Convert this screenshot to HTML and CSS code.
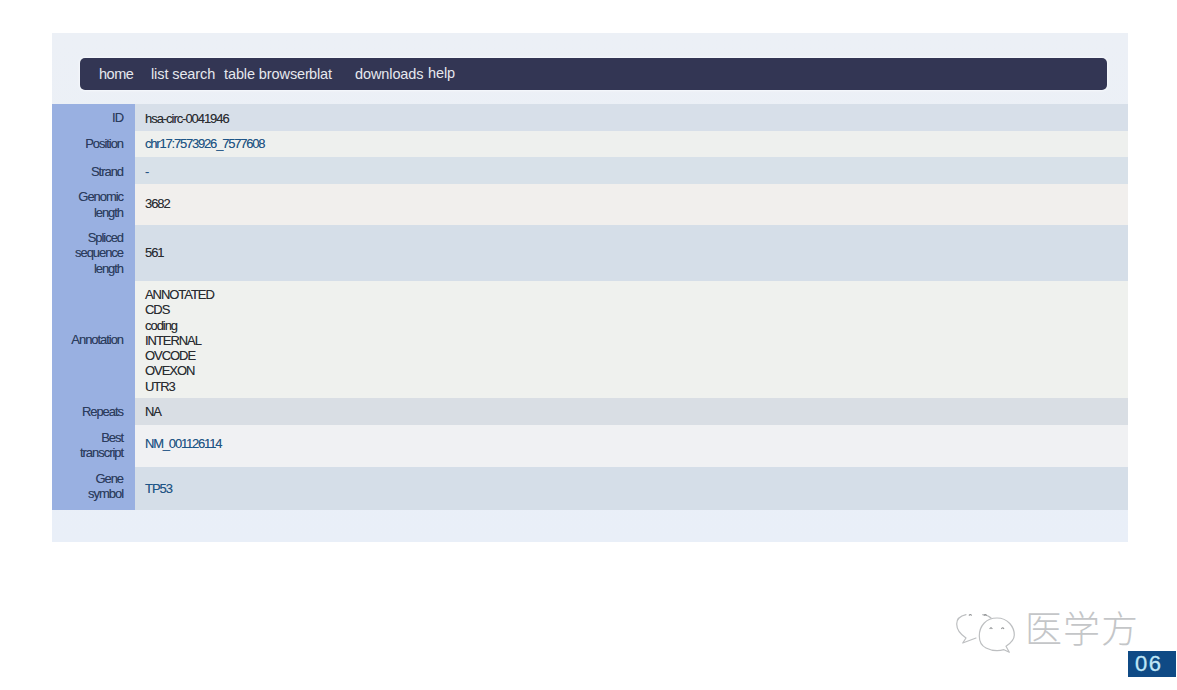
FILE: index.html
```html
<!DOCTYPE html>
<html lang="en">
<head>
<meta charset="utf-8">
<title>hsa-circ-0041946</title>
<link rel="stylesheet" href="styles.css">
</head>
<body>
<main class="panel">
  <nav class="nav">
    <span class="nav-item w-home">home</span>
    <span class="nav-item w-list">list search</span>
    <span class="nav-item w-table">table browser</span>
    <span class="nav-item w-blat">blat</span>
    <span class="nav-item w-down">downloads</span>
    <span class="nav-item raised">help</span>
  </nav>
  <div class="info">
    <div class="row h27 dark1"><div class="label">ID</div><div class="value nudge-down">hsa-circ-0041946</div></div>
    <div class="row h26 light1"><div class="label">Position</div><div class="value link tight">chr17:7573926_7577608</div></div>
    <div class="row h27 dark2"><div class="label nudge-down">Strand</div><div class="value link nudge-down">-</div></div>
    <div class="row h41 light2"><div class="label">Genomic<br>length</div><div class="value nudge-up">3682</div></div>
    <div class="row h56 dark3"><div class="label">Spliced<br>sequence<br>length</div><div class="value">561</div></div>
    <div class="row h117 light3"><div class="label">Annotation</div><div class="value nudge-down">ANNOTATED<br>CDS<br>coding<br>INTERNAL<br>OVCODE<br>OVEXON<br>UTR3</div></div>
    <div class="row h27 dark4"><div class="label">Repeats</div><div class="value">NA</div></div>
    <div class="row h42 light4"><div class="label nudge-up">Best<br>transcript</div><div class="value link nudge-up2 tight">NM_001126114</div></div>
    <div class="row h43 dark3"><div class="label nudge-up3">Gene<br>symbol</div><div class="value link">TP53</div></div>
  </div>
</main>
<footer class="footer">
  <div class="brand">
    <svg class="logo" width="60" height="44" viewBox="0 0 60 44" fill="none" stroke="#bdbfc1" stroke-width="1.2" stroke-linecap="round" stroke-linejoin="round">
      <path d="M10 4.700C4 6 .7 9 .7 14C.7 19 4 24 10 28L6.700 33L20 28"/>
      <path d="M26.700 4.700C30 5 33 6 35 8"/>
      <path d="M48 39.700L53.300 42.300L50 36.300C55 33 58.300 30 58.300 25C58.300 17 52 8 41 8C30 8 23.300 16 23.300 26C23.300 33 26 36 30 38C36 41 43 41 48 39.700Z"/>
      <path d="M13.300 5.200Q14.300 3.800 15.300 5.200M28.300 5.200Q29.300 3.800 30.300 5.200M34 18.500Q35 17 36 18.500M45.700 18.500Q46.700 17 47.700 18.500" stroke="#8f9193"/>
    </svg>
    <span class="brand-name">医学方</span>
  </div>
  <div class="page-no">06</div>
</footer>
</body>
</html>
```
FILE: styles.css
```css
* { box-sizing: border-box; }
html, body { margin: 0; padding: 0; }
body {
  width: 1177px;
  height: 690px;
  overflow: hidden;
  background: #ffffff;
  font-family: "Liberation Sans", Arial, sans-serif;
}
.panel {
  margin: 33px 49px 0 52px;
  height: 509px;
  padding-top: 25px;
  background: linear-gradient(#ecf0f6, #e9eff8);
}
.nav {
  display: flex;
  align-items: center;
  height: 32px;
  margin: 0 21px 14px 28px;
  padding-left: 19px;
  background: #333654;
  border-radius: 5px;
  box-shadow: 0 0 2px 1px #f6f8fc;
  color: #e6e8ee;
  font-size: 14.500px;
  letter-spacing: -0.1px;
}
.nav-item { display: block; white-space: nowrap; }
.w-home { width: 52px; letter-spacing: -0.5px; }
.w-list { width: 73px; }
.w-table { width: 85px; }
.w-blat { width: 46px; }
.w-down { width: 73px; }
.raised { margin-top: -2px; }
.row {
  display: grid;
  grid-template-columns: 83px 1fr;
  font-size: 13px;
  line-height: 15.200px;
  letter-spacing: -1.050px;
  text-shadow: 0 0 .6px rgba(40, 50, 70, .45);
}
.h26 { height: 26px; }
.h27 { height: 27px; }
.h41 { height: 41px; }
.h42 { height: 42px; }
.h43 { height: 43px; }
.h56 { height: 56px; }
.h117 { height: 117px; }
.label {
  display: flex;
  align-items: center;
  justify-content: flex-end;
  padding-right: 12px;
  text-align: right;
  background: #99b0e1;
  color: #2b3c5e;
}
.value {
  display: flex;
  align-items: center;
  padding-left: 10px;
  color: #2a2c30;
}
.link { color: #1d5688; }
.tight { letter-spacing: -1.200px; }
.nudge-down { padding-top: 2px; }
.nudge-up { padding-bottom: 2px; }
.nudge-up2 { padding-bottom: 4px; }
.nudge-up3 { padding-bottom: 5px; }
.dark1 { background: #d7dfe9; }
.dark2 { background: #d8e1e9; }
.dark3 { background: #d5dee8; }
.dark4 { background: #d9dee4; }
.light1 { background: #eef0ee; }
.light2 { background: #f1efed; }
.light3 { background: #eff1ee; }
.light4 { background: #f0f1f3; }
.footer {
  display: flex;
  flex-direction: column;
  align-items: flex-end;
  padding: 67px 1px 0 0;
}
.brand {
  display: flex;
  align-items: center;
  gap: 9px;
  height: 42px;
  margin-right: 38px;
}
.logo { display: block; margin-top: 3px; }
.brand-name {
  font-family: "Noto Sans CJK SC", sans-serif;
  font-weight: 300;
  font-size: 37px;
  line-height: 42px;
  letter-spacing: 1px;
  color: #c4c6c8;
  margin-top: -6px;
  margin-right: -1px;
}
.page-no {
  width: 48px;
  height: 26px;
  padding-left: 7px;
  background: #0f4a85;
  color: #bfe6f6;
  font-size: 22px;
  line-height: 26px;
  letter-spacing: 1.500px;
  -webkit-text-stroke: 0.3px #bfe6f6;
}
```
